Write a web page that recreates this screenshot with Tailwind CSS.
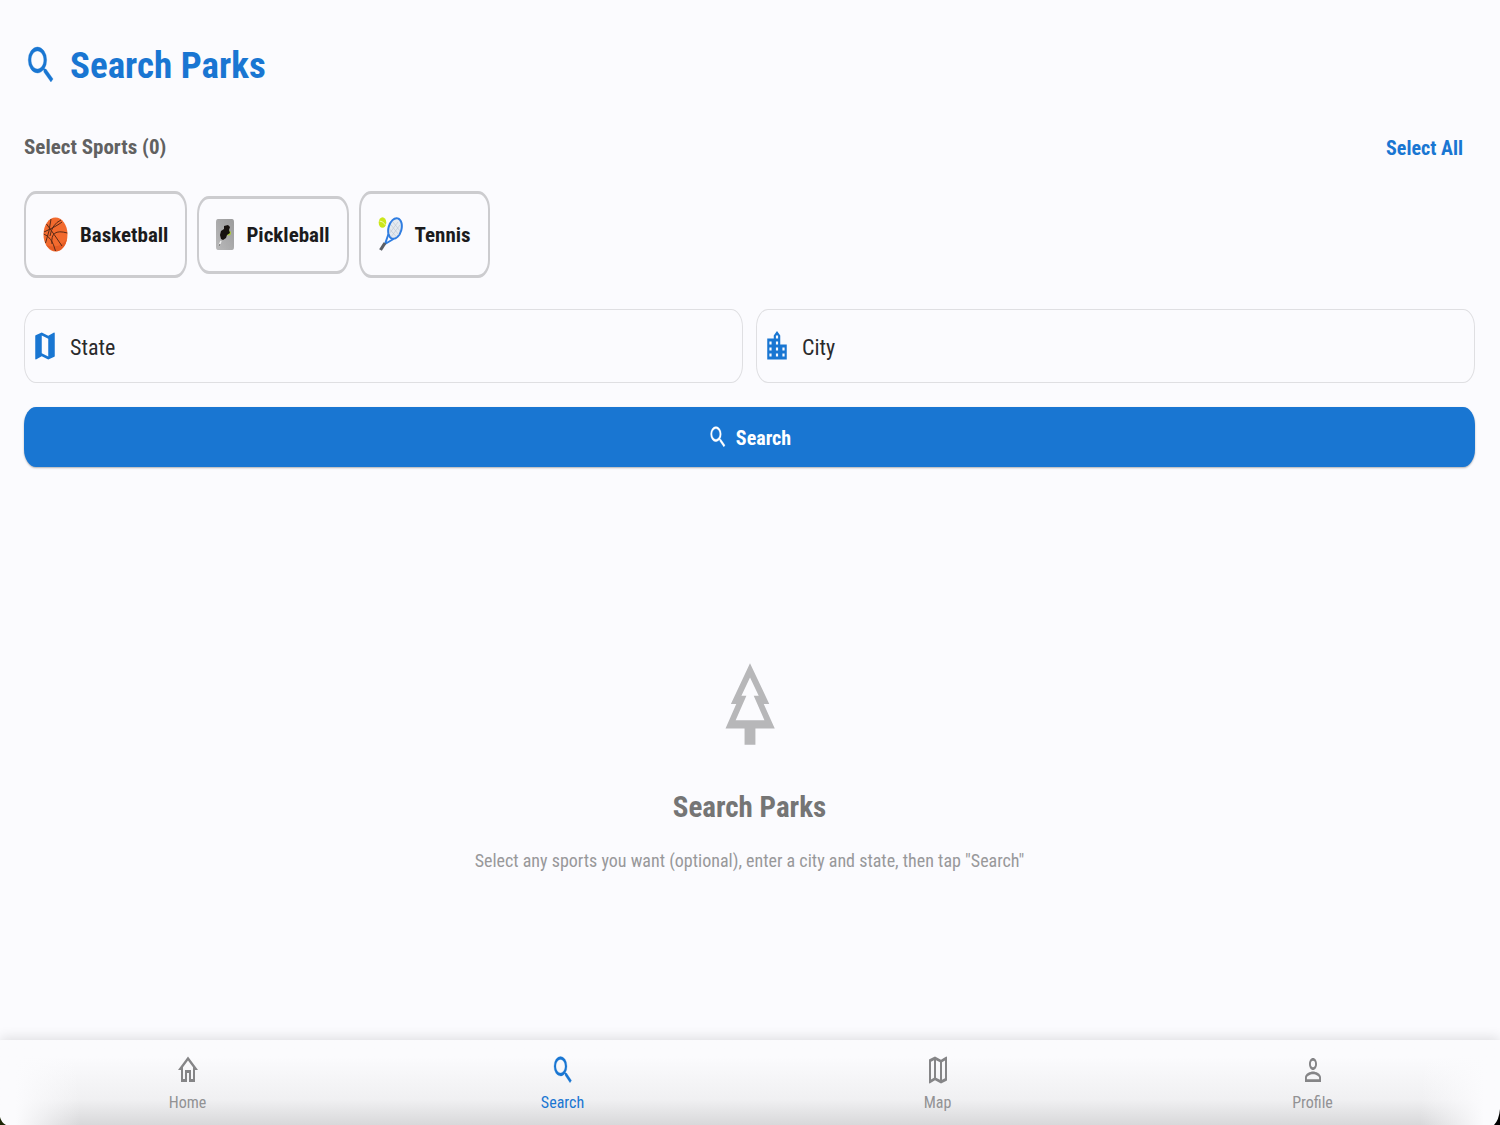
<!DOCTYPE html>
<html lang="en">
<head>
<meta charset="utf-8">
<meta name="viewport" content="width=device-width, initial-scale=1">
<title>Search Parks</title>
<script src="https://cdn.jsdelivr.net/npm/@tailwindcss/browser@4"></script>
</head>
<body class="bg-[#fbfbfe] font-['Roboto_Condensed','Liberation_Sans_Narrow',Roboto,sans-serif]">
<svg class="hidden" aria-hidden="true">
  <symbol id="i-search" viewBox="0 0 24 24" preserveAspectRatio="none"><path fill="currentColor" stroke="currentColor" stroke-width=".2" d="M15.5 14h-.79l-.28-.27A6.471 6.471 0 0 0 16 9.500 6.500 6.500 0 1 0 9.500 16c1.610 0 3.090-.59 4.230-1.570l.27.28v.79l5 4.990L20.490 19l-4.990-5zm-6 0C7.010 14 5 11.990 5 9.500S7.010 5 9.500 5 14 7.010 14 9.500 11.990 14 9.500 14z"/></symbol>
</svg>
<div class="flex min-h-screen flex-col">
  <main class="flex flex-1 flex-col pt-[41px] pr-[25px] pl-6">
    <h1 class="flex h-12 items-center gap-3 text-[37px] font-bold text-[#1976d2]">
      <svg class="h-12 w-[34px]" aria-hidden="true"><use href="#i-search"/></svg>
      <span class="pt-0.5">Search Parks</span>
    </h1>
    <div class="mt-[38px] flex h-[42px] items-center justify-between pr-3">
      <h2 class="text-[21px] font-bold text-[#616161]">Select Sports (0)</h2>
      <button type="button" class="text-[20px] font-bold text-[#1976d2]">Select All</button>
    </div>
    <div class="mt-[22px] flex items-center gap-2.5 text-[21px] font-bold text-[#1b1b1d]">
      <button type="button" class="flex h-[87px] items-center gap-3 rounded-[12px/18px] border-x-2 border-y-3 border-[#cccccf] px-[17px]">
        <svg class="h-9 w-[25px]" viewBox="0 0 25 36" aria-hidden="true">
          <ellipse cx="12.500" cy="17.500" rx="12" ry="17" fill="#f26a2e"/>
          <path d="M3 28Q9 35 15 34Q22 32 24 22Q16 33 3 28Z" fill="#e55c25"/>
          <g fill="none" stroke="#5a2a17" stroke-width="1">
            <path d="M1 15Q14 9 19 5M3.500 7Q11 17 19 29M8 2Q7 13 2.500 26M0.800 17Q9 20 12.500 34M24.300 16Q7 11 9 27M7 19Q9 7 18 3"/>
          </g>
        </svg>
        <span class="pt-0.5">Basketball</span>
      </button>
      <button type="button" class="flex h-[78px] items-center gap-3 rounded-[12px/18px] border-x-2 border-y-3 border-[#cccccf] px-[17px]">
        <svg class="h-8 w-[18px]" viewBox="0 0 18 32" aria-hidden="true">
          <defs><linearGradient id="tile" x1="0" y1="1" x2="1" y2="0"><stop stop-color="#b9b9ba"/><stop offset="1" stop-color="#9b9b9c"/></linearGradient></defs>
          <rect width="18" height="31" rx="2" ry="3" fill="url(#tile)"/>
          <circle cx="12.500" cy="14" r="2.500" fill="#a9c83b"/>
          <path d="M8 7l4-1 2 2-1 3 1 3-3 2-1 3-3 2-2-1-1-4 1-4 3-2Z" fill="#17120f"/>
          <path d="M5 22l-2 5" stroke="#eee" stroke-width="1.500"/><path d="M4 25l-1 2" stroke="#666" stroke-width="1"/>
        </svg>
        <span class="pt-0.5">Pickleball</span>
      </button>
      <button type="button" class="flex h-[87px] items-center gap-3 rounded-[12px/18px] border-x-2 border-y-3 border-[#cccccf] px-[17px]">
        <svg class="h-9 w-[25px]" viewBox="0 0 25 36" aria-hidden="true">
          <ellipse cx="4.500" cy="5.500" rx="3.800" ry="5.300" fill="#cbe61a"/>
          <path d="M1.500 4Q5 4 7.500 8" stroke="#f2f9b0" fill="none"/>
          <ellipse cx="17" cy="11.500" rx="6.500" ry="10.500" transform="rotate(15 17 11.500)" fill="#e4eaf0" stroke="#2f7de1" stroke-width="2"/>
          <path d="M13 8l8 10M15 5l7 9M11.500 12l7 8M20 5l-9 12M22 8l-9 12" stroke="#bcc5ce" stroke-width=".6"/>
          <path d="M10.500 17L7 27M15.500 22L7 27" stroke="#2f7de1" stroke-width="2" fill="none"/>
          <path d="M7 26L2.500 33" stroke="#5b5f66" stroke-width="3.200"/>
        </svg>
        <span class="pt-0.5">Tennis</span>
      </button>
    </div>
    <form class="mt-[31px]" onsubmit="return false">
      <div class="grid grid-cols-2 gap-[13px]">
        <label class="flex h-[74px] items-center gap-3 rounded-[12px/18px] border border-[#dfdfe2] px-[7px]">
          <svg class="h-9 w-[26px] shrink-0 text-[#1976d2]" viewBox="0 0 24 24" preserveAspectRatio="none" aria-hidden="true"><path fill="currentColor" d="M20.500 3l-.16.03L15 5.100 9 3 3.360 4.900c-.21.07-.36.25-.36.48V20.500c0 .28.22.5.5.5l.16-.03L9 18.900l6 2.100 5.640-1.900c.21-.07.36-.25.36-.48V3.500c0-.28-.22-.5-.5-.5zM15 19l-6-2.110V5l6 2.110V19z"/></svg>
          <input type="text" aria-label="State" placeholder="State" class="w-full min-w-0 bg-transparent pt-0.5 text-[22px] outline-none placeholder:text-[#2a2a2c]">
        </label>
        <label class="flex h-[74px] items-center gap-3 rounded-[12px/18px] border border-[#dfdfe2] px-[7px]">
          <svg class="h-9 w-[26px] shrink-0 text-[#1976d2]" viewBox="0 0 24 24" preserveAspectRatio="none" aria-hidden="true"><path fill="currentColor" d="M15 11V5l-3-3-3 3v2H3v14h18V11h-6zm-8 8H5v-2h2v2zm0-4H5v-2h2v2zm0-4H5V9h2v2zm6 8h-2v-2h2v2zm0-4h-2v-2h2v2zm0-4h-2V9h2v2zm0-4h-2V5h2v2zm6 12h-2v-2h2v2zm0-4h-2v-2h2v2z"/></svg>
          <input type="text" aria-label="City" placeholder="City" class="w-full min-w-0 bg-transparent pt-0.5 text-[22px] outline-none placeholder:text-[#2a2a2c]">
        </label>
      </div>
      <button type="submit" class="mt-6 flex h-[60px] w-full items-center justify-center gap-2 rounded-[12px/18px] bg-[#1976d2] text-[20px] font-bold text-white shadow-[0_1px_2px_rgba(0,0,0,0.3)]">
        <svg class="h-7 w-5" aria-hidden="true"><use href="#i-search"/></svg>
        <span class="pt-0.5">Search</span>
      </button>
    </form>
    <section class="flex flex-1 flex-col items-center justify-center pt-6 text-center">
      <svg class="h-[98px] w-[66px] text-[#b7b7b9]" viewBox="0 0 24 24" preserveAspectRatio="none" aria-hidden="true"><path fill="currentColor" d="M17 12h2L12 2 5.050 12H7l-3.900 6h6.920v4h3.950v-4H21l-4-6zM6.790 16l3.900-6H8.880l3.130-4.500 3.150 4.500h-1.810l3.900 6H6.790z"/></svg>
      <h2 class="mt-[30px] text-[29px] leading-[48px] font-bold text-[#757575]">Search Parks</h2>
      <p class="mt-3.5 text-[18px] leading-8 text-[#98989a]">Select any sports you want (optional), enter a city and state, then tap "Search"</p>
    </section>
  </main>
  <nav class="relative grid h-[85px] grid-cols-4 bg-linear-to-b from-[#fbfbfd] from-20% via-[#f0f0f2] via-70% to-[#d8d8da] text-[16px] text-[#929294] shadow-[0_-2px_12px_rgba(0,0,0,0.12)]">
    <a href="#home" class="flex flex-col items-center pt-3">
      <svg class="h-9 w-6 text-[#858587]" viewBox="0 0 24 24" preserveAspectRatio="none" aria-hidden="true"><path fill="currentColor" d="M12 5.690l5 4.500V18h-2v-6H9v6H7v-7.810l5-4.500M12 3L2 12h3v8h6v-6h2v6h6v-8h3L12 3z"/></svg>
      <span class="leading-[30px]">Home</span>
    </a>
    <a href="#search" aria-current="page" class="flex flex-col items-center pt-3 text-[#1976d2]">
      <svg class="h-9 w-6" aria-hidden="true"><use href="#i-search"/></svg>
      <span class="leading-[30px]">Search</span>
    </a>
    <a href="#map" class="flex flex-col items-center pt-3">
      <svg class="h-9 w-6 text-[#858587]" viewBox="0 0 24 24" preserveAspectRatio="none" aria-hidden="true"><path fill="currentColor" d="M20.500 3l-.16.03L15 5.100 9 3 3.360 4.900c-.21.07-.36.25-.36.48V20.500c0 .28.22.5.5.5l.16-.03L9 18.900l6 2.100 5.640-1.900c.21-.07.36-.25.36-.48V3.500c0-.28-.22-.5-.5-.5zM10 5.470l4 1.400v11.660l-4-1.400V5.470zm-5 .99l3-1.010v11.700l-3 1.160V6.460zm14 11.080l-3 1.010V6.860l3-1.160v11.840z"/></svg>
      <span class="leading-[30px]">Map</span>
    </a>
    <a href="#profile" class="flex flex-col items-center pt-3">
      <svg class="h-9 w-6 text-[#858587]" viewBox="0 0 24 24" preserveAspectRatio="none" aria-hidden="true"><path fill="currentColor" d="M12 5.900a2.100 2.100 0 1 1 0 4.200 2.100 2.100 0 0 1 0-4.200m0 9c2.970 0 6.100 1.460 6.100 2.100v1.100H5.900V17c0-.64 3.130-2.100 6.100-2.100M12 4C9.790 4 8 5.790 8 8s1.790 4 4 4 4-1.790 4-4-1.790-4-4-4zm0 9c-2.670 0-8 1.340-8 4v3h16v-3c0-2.660-5.330-4-8-4z"/></svg>
      <span class="leading-[30px]">Profile</span>
    </a>
    <div class="pointer-events-none absolute inset-y-0 left-0 w-20 bg-linear-to-r from-[#fbfbfd] from-20% to-transparent"></div>
    <div class="pointer-events-none absolute inset-y-0 right-0 w-20 bg-linear-to-l from-[#fbfbfd] from-20% to-transparent"></div>
    <svg class="pointer-events-none absolute bottom-0 left-0 h-2 w-1.5" viewBox="0 0 6 8" aria-hidden="true"><path d="M0 0Q1 5 6 8H0Z" fill="#1c2606"/></svg>
    <svg class="pointer-events-none absolute right-0 bottom-0 h-4 w-1.5" viewBox="0 0 6 16" aria-hidden="true"><path d="M6 0Q5 11 0 16H6Z" fill="#000"/></svg>
  </nav>
</div>
</body>
</html>
